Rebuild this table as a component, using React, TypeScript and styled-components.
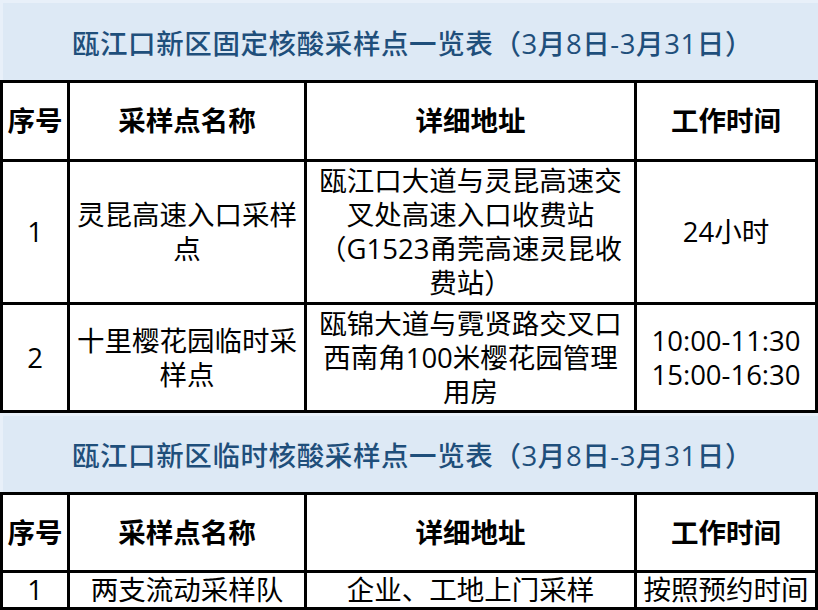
import styled, { createGlobalStyle } from "styled-components";

interface Site {
  no: string;
  name: string[];
  address: string[];
  hours: string[];
  height: number;
}

interface Section {
  title: string;
  headHeight: number;
  sites: Site[];
}

const GlobalStyle = createGlobalStyle`
  html, body {
    margin: 0;
    padding: 0;
    background: #ffffff;
  }
  body {
    font-family: "Open Sans", "Noto Sans CJK SC", sans-serif;
    color: #000000;
  }
`;

const StylePage = styled.div`
  width: 818px;
  display: flex;
  flex-direction: column;
`;

const StyleBand = styled.div<{ $h: number }>`
  box-sizing: border-box;
  height: ${(p) => p.$h}px;
  display: flex;
  align-items: center;
  justify-content: center;
  padding-left: 4px;
  background: #dde9f5;
  border-top: 3px solid #e8f0f9;
  border-left: 3px solid #e8f0f9;
  color: #1f4f7b;
  font-size: 27.5px;
  font-weight: 500;
  letter-spacing: 0.6px;
  white-space: nowrap;
`;

const StyleTable = styled.table`
  width: 818px;
  table-layout: fixed;
  border-collapse: separate;
  border-spacing: 0;
  border-left: 3px solid #000;
  border-top: 3px solid #000;
  box-sizing: border-box;
`;

const StyleCell = styled.td<{ $head?: boolean; $h: number }>`
  box-sizing: border-box;
  height: ${(p) => p.$h}px;
  padding: 0;
  border-right: 3px solid #000;
  border-bottom: 3px solid #000;
  text-align: center;
  vertical-align: middle;
  font-size: 27.5px;
  line-height: 34px;
  font-weight: ${(p) => (p.$head ? 700 : 400)};
  white-space: nowrap;
`;

const StyleLine = styled.div`
  display: block;
`;

const sections: Section[] = [
  {
    title: "瓯江口新区固定核酸采样点一览表（3月8日-3月31日）",
    headHeight: 79,
    sites: [
      {
        no: "1",
        name: ["灵昆高速入口采样", "点"],
        address: [
          "瓯江口大道与灵昆高速交",
          "叉处高速入口收费站",
          "（G1523甬莞高速灵昆收",
          "费站）",
        ],
        hours: ["24小时"],
        height: 143,
      },
      {
        no: "2",
        name: ["十里樱花园临时采", "样点"],
        address: ["瓯锦大道与霓贤路交叉口", "西南角100米樱花园管理", "用房"],
        hours: ["10:00-11:30", "15:00-16:30"],
        height: 108,
      },
    ],
  },
  {
    title: "瓯江口新区临时核酸采样点一览表（3月8日-3月31日）",
    headHeight: 78,
    sites: [
      {
        no: "1",
        name: ["两支流动采样队"],
        address: ["企业、工地上门采样"],
        hours: ["按照预约时间"],
        height: 36,
      },
    ],
  },
];

const Lines = ({ lines }: { lines: string[] }) => (
  <>
    {lines.map((l) => (
      <StyleLine key={l}>{l}</StyleLine>
    ))}
  </>
);

const SiteTable = ({ section }: { section: Section }) => (
  <StyleTable>
    <colgroup>
      <col style={{ width: 67 }} />
      <col style={{ width: 237 }} />
      <col style={{ width: 330 }} />
      <col style={{ width: 181 }} />
    </colgroup>
    <tbody>
      <tr>
        <StyleCell $head $h={section.headHeight}>序号</StyleCell>
        <StyleCell $head $h={section.headHeight}>采样点名称</StyleCell>
        <StyleCell $head $h={section.headHeight}>详细地址</StyleCell>
        <StyleCell $head $h={section.headHeight}>工作时间</StyleCell>
      </tr>
      {section.sites.map((s) => (
        <tr key={s.no + s.name[0]}>
          <StyleCell $h={s.height}>{s.no}</StyleCell>
          <StyleCell $h={s.height}>
            <Lines lines={s.name} />
          </StyleCell>
          <StyleCell $h={s.height}>
            <Lines lines={s.address} />
          </StyleCell>
          <StyleCell $h={s.height}>
            <Lines lines={s.hours} />
          </StyleCell>
        </tr>
      ))}
    </tbody>
  </StyleTable>
);

const App = () => (
  <>
    <GlobalStyle />
    <StylePage>
      <StyleBand $h={80}>{sections[0].title}</StyleBand>
      <SiteTable section={sections[0]} />
      <StyleBand $h={79}>{sections[1].title}</StyleBand>
      <SiteTable section={sections[1]} />
    </StylePage>
  </>
);

export default App;
